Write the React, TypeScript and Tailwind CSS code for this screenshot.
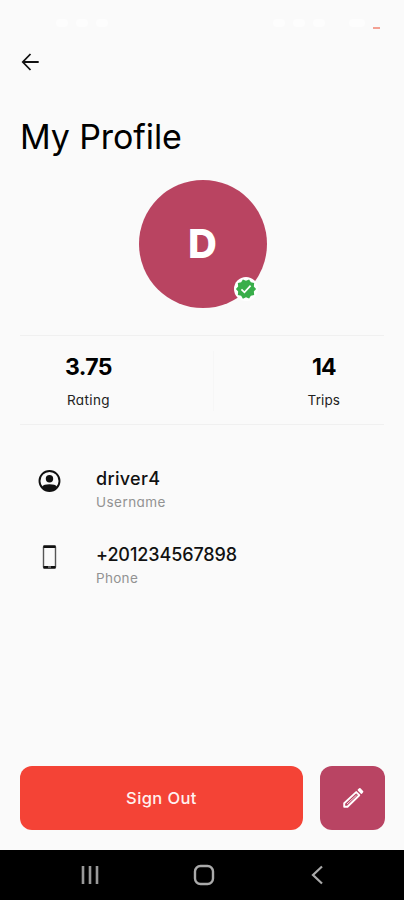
import type { ReactNode } from 'react';

interface StatProps {
  value: string;
  label: string;
  valueClass: string;
  labelClass: string;
}

interface InfoRowProps {
  icon: ReactNode;
  value: string;
  label: string;
  valueClass: string;
  labelClass: string;
}

function Stat({ value, label, valueClass, labelClass }: StatProps) {
  return (
    <div className="flex flex-col items-center whitespace-nowrap">
      <span className={`text-[23px] leading-8 font-bold text-black ${valueClass}`}>{value}</span>
      <span className={`mt-[5px] text-[13.5px] leading-6 text-[#222222] ${labelClass}`}>{label}</span>
    </div>
  );
}

function InfoRow({ icon, value, label, valueClass, labelClass }: InfoRowProps) {
  return (
    <div className="flex h-[76px]">
      <div className="flex w-[76px] justify-start pt-[12px] pl-[17px]">{icon}</div>
      <div className="flex flex-col whitespace-nowrap">
        <span className={`pt-[10px] text-[18px] leading-6 font-medium text-[#111111] ${valueClass}`}>{value}</span>
        <span className={`-mt-px text-[13.5px] leading-6 text-[#929292] ${labelClass}`}>{label}</span>
      </div>
    </div>
  );
}

export default function App() {
  return (
    <div className="flex h-[900px] w-[404px] flex-col overflow-hidden bg-[#fafafa] font-['Inter','Open_Sans',sans-serif] [font-feature-settings:'cv11','ss03']">
      {/* Status bar */}
      <div className="flex h-[46px] items-center justify-between pr-6 pl-6">
        <div className="flex items-center gap-2 pl-8">
          <span className="h-2 w-3 rounded-full bg-[#fdfdfd]" />
          <span className="h-2 w-3 rounded-full bg-[#fdfdfd]" />
          <span className="h-2 w-3 rounded-full bg-[#fdfdfd]" />
        </div>
        <div className="flex items-center gap-2">
          <span className="h-2 w-3 rounded-full bg-[#fdfdfd]" />
          <span className="h-2 w-3 rounded-full bg-[#fdfdfd]" />
          <span className="h-2 w-3 rounded-full bg-[#fdfdfd]" />
          <span className="ml-4 h-2 w-4 rounded-sm bg-[#fdfdfd]" />
          <span className="mt-[9px] h-[2px] w-[7px] bg-[#f3a193]" />
        </div>
      </div>

      {/* Back button and title */}
      <div className="px-5">
        <button className="block h-8" aria-label="Back">
          <svg className="h-5 w-5" viewBox="0 0 20 20" fill="none" stroke="#111" strokeWidth="1.8">
            <path d="M10.5 2L2.8 10L10.5 18M2.8 10H18.7" />
          </svg>
        </button>
        <h1 className="mt-[35px] text-[34px] leading-[48px] tracking-[-0.1px] whitespace-nowrap text-black">My Profile</h1>
      </div>

      {/* Avatar */}
      <div className="mt-[19px] flex justify-center pl-[1px]">
        <div className="relative flex h-32 w-32 items-center justify-center rounded-full bg-[#b94461]">
          <span className="text-[40px] leading-none font-extrabold text-white">D</span>
          <div className="absolute top-[97px] left-[95px] flex h-6 w-6 items-center justify-center rounded-full bg-white">
            <svg className="h-[22px] w-[22px]" viewBox="0 0 24 24">
              <path
                fill="#39ae4a"
                d="M23 12l-2.44-2.79.34-3.69-3.61-.82-1.89-3.2L12 2.96 8.6 1.5 6.71 4.69 3.1 5.5l.34 3.7L1 12l2.44 2.79-.34 3.7 3.61.82L8.6 22.5l3.4-1.47 3.4 1.46 1.89-3.19 3.61-.82-.34-3.69z"
              />
              <path fill="none" stroke="#fff" strokeWidth="1.9" d="M7 12.3l3.3 3.3 6.7-7.2" />
            </svg>
          </div>
        </div>
      </div>

      {/* Rating and trips */}
      <div className="mx-5 mt-[27px] flex h-[90px] justify-between border-y border-[#f0f0f0] pt-[15px] pr-[44px] pl-[45px]">
        <Stat value="3.75" label="Rating" valueClass="tracking-[-0.6px]" labelClass="tracking-[0.4px]" />
        <div className="ml-[7px] h-[60px] w-px bg-[#f6f6f6]" />
        <Stat value="14" label="Trips" valueClass="tracking-[-1px]" labelClass="tracking-[0.1px]" />
      </div>

      {/* Contact details */}
      <div className="mx-5 mt-[32px] flex-1">
        <InfoRow
          icon={
            <svg className="h-6 w-6" viewBox="0 0 24 24">
              <circle cx="12.5" cy="12" r="10" fill="none" stroke="#111" strokeWidth="1.9" />
              <circle cx="12.5" cy="9.7" r="3.7" fill="#111" />
              <path fill="#111" d="M5 17.4c1.3-1.5 3.7-2.2 7.5-2.2s6.2.7 7.5 2.2c-1.6 2.9-4.4 4.6-7.5 4.6s-5.9-1.7-7.5-4.6z" />
            </svg>
          }
          value="driver4"
          label="Username"
          valueClass="tracking-[0.3px]"
          labelClass="tracking-[0.45px]"
        />
        <InfoRow
          icon={
            <svg className="h-6 w-6" viewBox="0 0 24 24">
              <rect x="6.5" y="1" width="12" height="22" rx="1" fill="none" stroke="#555" strokeWidth="1.4" />
              <path fill="#111" d="M6.5.5h12V3h-12zM6.5 21h12v2.5h-12z" />
              <path stroke="#fafafa" strokeWidth="0.7" d="M11 22h3" />
            </svg>
          }
          value="+201234567898"
          label="Phone"
          valueClass="tracking-[-0.1px]"
          labelClass="tracking-[0.3px]"
        />
      </div>

      {/* Actions */}
      <div className="mb-5 flex gap-[17px] pr-[19px] pl-5">
        <button className="h-16 flex-1 rounded-[12px] bg-[#f44336] text-[16.5px] font-medium tracking-[0.4px] text-[#fff1ef]">
          Sign Out
        </button>
        <button className="flex h-16 w-[65px] items-center justify-center rounded-[12px] bg-[#b94463]" aria-label="Edit profile">
          <svg className="h-6 w-6" viewBox="0 0 24 24" fill="none" stroke="#fff" strokeWidth="1.9" strokeLinejoin="round">
            <path d="M3.2 17.3L15.2 6.1L18.3 9.2L6.5 20.7H3.2z" />
            <path d="M6 18L15.5 9.2" strokeWidth="0.8" />
            <path fill="#fff" d="M17.6 4L18.8 3L21.4 5.6L20.4 6.9z" />
          </svg>
        </button>
      </div>

      {/* System navigation */}
      <div className="flex h-[50px] items-center justify-between bg-black pr-[76px] pl-[79px]">
        <svg className="h-[22px] w-[22px]" viewBox="0 0 22 22" stroke="#999" strokeWidth="2.6">
          <path d="M4 2v18M11 2v18M18 2v18" />
        </svg>
        <svg className="h-[22px] w-[22px]" viewBox="0 0 22 22" fill="none" stroke="#aaa" strokeWidth="2.4">
          <rect x="2" y="2" width="18" height="18" rx="5.5" />
        </svg>
        <svg className="h-[22px] w-[22px]" viewBox="0 0 22 22" fill="none" stroke="#aaa" strokeWidth="2.2">
          <path d="M16 2.5L7 11L16 19.5" />
        </svg>
      </div>
    </div>
  );
}
